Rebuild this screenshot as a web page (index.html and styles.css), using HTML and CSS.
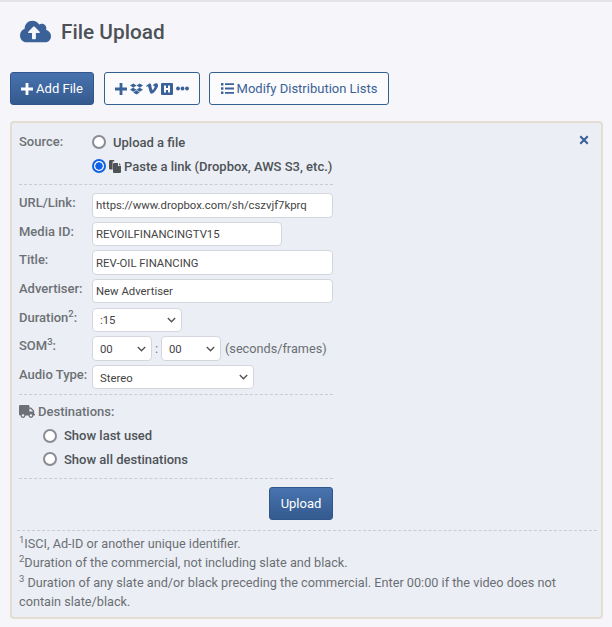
FILE: index.html
```html
<!DOCTYPE html>
<html lang="en">
<head>
<meta charset="utf-8">
<title>File Upload</title>
<link rel="stylesheet" href="styles.css">
</head>
<body>
<header class="page-title">
  <svg class="cloud" viewBox="0 0 640 512" aria-hidden="true"><path d="M537.6 226.6c4.1-10.7 6.4-22.4 6.4-34.6 0-53-43-96-96-96-19.7 0-38.1 6-53.3 16.2C367 64.2 315.3 32 256 32c-88.4 0-160 71.6-160 160 0 2.7.1 5.4.2 8.1C40.2 219.8 0 273.2 0 336c0 79.5 64.5 144 144 144h368c70.7 0 128-57.3 128-128 0-61.9-44-113.6-102.4-125.4zM393.4 288H328v112c0 8.8-7.2 16-16 16h-48c-8.8 0-16-7.2-16-16V288h-65.4c-14.3 0-21.4-17.2-11.3-27.3l105.4-105.4c6.2-6.2 16.4-6.2 22.6 0l105.4 105.4c10.1 10.1 2.9 27.3-11.3 27.3z"/></svg>
  <h1>File Upload</h1>
</header>
<nav class="actions">
  <button class="btn btn-primary" type="button">
    <svg class="ico-plus" viewBox="0 0 12 12" aria-hidden="true"><path d="M4.6 0h2.800v4.600H12v2.800H7.400V12H4.600V7.400H0V4.600h4.600z"/></svg>
    Add File
  </button>
  <button class="btn btn-outline btn-icons" type="button" aria-label="Add from service">
    <svg class="ico-plus" viewBox="0 0 12 12" aria-hidden="true"><path d="M4.6 0h2.800v4.600H12v2.800H7.400V12H4.600V7.400H0V4.600h4.600z"/></svg>
    <svg class="ico-drop" viewBox="0 32 528 448" aria-hidden="true"><path d="M264.400 116.300l-132 84.300 132 84.300-132 84.300L0 284.100l132.300-84.300L0 116.300 132.300 32l132.100 84.300zM131.600 395.700l132-84.300 132 84.300-132 84.300-132-84.300zm132.800-111.600l132-84.300-132-83.600L395.700 32 528 116.300l-132.300 84.300L528 284.800l-132.300 84.300-131.300-85z"/></svg>
    <svg class="ico-vimeo" viewBox="0 60 448 400" aria-hidden="true"><path d="M447.800 153.600c-2 43.600-32.400 103.300-91.400 179.100-60.900 79.200-112.400 118.800-154.600 118.800-26.100 0-48.200-24.100-66.300-72.300C100.300 250 85.300 174.300 56.200 174.300c-3.400 0-15.100 7.100-35.200 21.100L0 168.200c51.600-45.300 100.900-95.700 131.800-98.500 34.900-3.400 56.300 20.500 64.400 71.500 28.700 181.500 41.400 208.900 93.600 126.700 18.700-29.600 28.800-52.100 30.200-67.600 4.800-45.900-35.800-42.800-63.300-31 22-72.100 64.100-107.100 126.200-105.100 45.800 1.200 67.500 31.100 64.900 89.400z"/></svg>
    <svg class="ico-h" viewBox="0 0 12 12" aria-hidden="true"><path fill-rule="evenodd" d="M1 0h10a1 1 0 0 1 1 1v10a1 1 0 0 1-1 1H1a1 1 0 0 1-1-1V1a1 1 0 0 1 1-1zm2 2.500v7h2V7h2v2.500h2v-7H7V5H5V2.500z"/></svg>
    <svg class="ico-dots" viewBox="0 0 13 5" aria-hidden="true"><circle cx="2" cy="2.500" r="1.900"/><circle cx="6.500" cy="2.500" r="1.900"/><circle cx="11" cy="2.500" r="1.900"/></svg>
  </button>
  <button class="btn btn-outline btn-lists" type="button">
    <svg class="ico-list" viewBox="0 0 13 11" aria-hidden="true"><path d="M0 0h2.400v2.400H0zM4 .3h9v1.800H4zM0 4.300h2.400v2.400H0zM4 4.600h9v1.800H4zM0 8.600h2.400V11H0zM4 8.900h9v1.800H4z"/></svg>
    Modify Distribution Lists
  </button>
</nav>
<main class="panel">
  <a class="close" href="#" aria-label="Close">
    <svg viewBox="0 0 10 10" aria-hidden="true"><path d="M2 .5L5 3.500 8 .5 9.500 2 6.500 5 9.500 8 8 9.500 5 6.500 2 9.500 .5 8 3.500 5 .5 2z"/></svg>
  </a>
  <form class="form">
    <div class="source">
      <span class="label">Source:</span>
      <div class="source-opts">
        <label class="radio radio-source"><input type="radio" name="src"> <span>Upload a file</span></label>
        <label class="radio radio-source radio-link"><input type="radio" name="src" checked>
          <svg class="ico-paste" viewBox="0 0 12 13" aria-hidden="true"><path d="M1.200 0h4v1.500H3.600v8H1a1 1 0 0 1-1-1V1.200A1.200 1.200 0 0 1 1.200 0zM5 3h4v3h3v6a1 1 0 0 1-1 1H5a1 1 0 0 1-1-1V4a1 1 0 0 1 1-1zm5 0l2 2.200h-2z"/></svg>
          <span>Paste a link (Dropbox, AWS S3, etc.)</span></label>
      </div>
    </div>
    <hr class="rule rule-first">
    <div class="fields">
      <span class="label">URL/Link:</span><input class="input input-full" type="text" value="https://www.dropbox.com/sh/cszvjf7kprq">
      <span class="label">Media ID:</span><input class="input input-mid" type="text" value="REVOILFINANCINGTV15">
      <span class="label">Title:</span><input class="input input-full" type="text" value="REV-OIL FINANCING">
      <span class="label">Advertiser:</span><input class="input input-full" type="text" value="New Advertiser">
      <span class="label">Duration<sup>2</sup>:</span><select class="select select-duration"><option>:15</option></select>
      <span class="label">SOM<sup>3</sup>:</span>
      <div class="som">
        <select class="select select-som"><option>00</option></select>
        <span class="colon">:</span>
        <select class="select select-som"><option>00</option></select>
        <span class="units">(seconds/frames)</span>
      </div>
      <span class="label">Audio Type:</span><select class="select select-audio"><option>Stereo</option></select>
    </div>
    <hr class="rule rule-second">
    <div class="dest-head">
      <svg class="ico-truck" viewBox="0 0 640 512" aria-hidden="true"><path d="M624 352h-16V243.900c0-12.700-5.100-24.900-14.100-33.900L494 110.100c-9-9-21.200-14.100-33.900-14.100H416V48c0-26.500-21.500-48-48-48H48C21.500 0 0 21.500 0 48v320c0 26.500 21.500 48 48 48h16c0 53 43 96 96 96s96-43 96-96h128c0 53 43 96 96 96s96-43 96-96h48c8.800 0 16-7.200 16-16v-32c0-8.800-7.200-16-16-16zM160 464c-26.500 0-48-21.500-48-48s21.500-48 48-48 48 21.500 48 48-21.500 48-48 48zm320 0c-26.500 0-48-21.500-48-48s21.500-48 48-48 48 21.500 48 48-21.500 48-48 48zm80-208H416V144h44.100l99.900 99.900V256z"/></svg>
      <span class="label">Destinations:</span>
    </div>
    <label class="radio radio-dest radio-dest-first"><input type="radio" name="dest"> <span>Show last used</span></label>
    <label class="radio radio-dest"><input type="radio" name="dest"> <span>Show all destinations</span></label>
    <hr class="rule rule-third">
    <div class="submit-row"><button class="btn btn-primary btn-upload" type="button">Upload</button></div>
  </form>
  <footer class="notes">
    <p><sup>1</sup>ISCI, Ad-ID or another unique identifier.</p>
    <p><sup>2</sup>Duration of the commercial, not including slate and black.</p>
    <p><sup>3</sup> Duration of any slate and/or black preceding the commercial. Enter 00:00 if the video does not contain slate/black.</p>
  </footer>
</main>
</body>
</html>
```

FILE: styles.css
```css
* { box-sizing: border-box; }
html, body { margin: 0; height: 100%; overflow: hidden; }
body {
  background: #f6f6fa;
  border-top: 2px solid #e4e4e7;
  font-family: Roboto, "Liberation Sans", sans-serif;
  font-size: 13px;
  color: #4e5358;
}
.page-title {
  display: flex;
  align-items: flex-start;
  gap: 10px;
  padding: 17px 0 0 20px;
  height: 70px;
}
.cloud { width: 31px; height: 25px; fill: #3a6198; }
.page-title h1 { margin: 0; font-size: 20.8px; line-height: 26px; font-weight: 500; color: #4c5157; }
.actions { display: flex; gap: 9px; padding-left: 10px; }
.btn {
  display: inline-flex;
  align-items: center;
  justify-content: center;
  height: 33px;
  border-radius: 3px;
  font: 400 13px Roboto, sans-serif;
  padding: 0;
}
.btn-primary {
  background: linear-gradient(#4873ae, #345a8f);
  border: 1px solid #30568b;
  color: #fff;
  width: 84px;
  gap: 3px;
}
.btn-outline {
  background: #fbfbfd;
  border: 1px solid #34608f;
  color: #3a6198;
  gap: 3px;
}
.btn-icons { width: 96px; margin-left: 1px; gap: 3px; }
.btn-lists { width: 180px; }
.ico-plus { width: 12px; height: 12px; fill: currentColor; }
.ico-drop { width: 13px; height: 12px; fill: currentColor; }
.ico-vimeo { width: 12px; height: 11px; fill: currentColor; }
.ico-h { width: 12px; height: 12px; fill: currentColor; }
.ico-dots { width: 13px; height: 5px; fill: currentColor; }
.ico-list { width: 13px; height: 11px; fill: currentColor; }
.panel {
  position: relative;
  margin: 16px 9px 0 10px;
  height: 498px;
  background: #ebeef4;
  border: 2px solid #e3ddd3;
  border-radius: 4px;
  padding: 7px 5px 0 7px;
}
.close { position: absolute; top: 12px; right: 12px; width: 10px; height: 10px; color: #3a6198; display: block; }
.close svg { display: block; width: 10px; height: 10px; fill: currentColor; }
.form { width: 314px; }
.label { font-weight: 500; color: #6d7176; font-size: 13px; line-height: 20px; align-self: start; white-space: nowrap; }
.label sup { font-size: 9.500px; line-height: 0; }
.source { display: grid; grid-template-columns: 73px 1fr; }
.source > .label { line-height: 24px; }
.source-opts { display: flex; flex-direction: column; }
.radio { display: flex; align-items: center; font-weight: 500; color: #4e5358; white-space: nowrap; }
.radio input {
  appearance: none;
  margin: 0;
  width: 14px;
  height: 14px;
  flex: none;
  background: #fff;
  border: 2px solid #8b8b96;
  border-radius: 50%;
}
.radio input:checked {
  border-color: #0f62e6;
  background: radial-gradient(circle, #0f62e6 0 3.400px, #fff 4px);
}
.radio-source { height: 24px; gap: 7px; }
.radio-link { gap: 3px; }
.ico-paste { width: 12px; height: 13px; fill: #4e5358; }
.rule { border: 0; border-top: 1px dashed #c9ccd0; margin: 0; }
.rule-first { margin-top: 6px; }
.fields {
  display: grid;
  grid-template-columns: 73px 241px;
  grid-auto-rows: 24.330px;
  row-gap: 4.330px;
  margin-top: 8px;
}
.input, .select {
  height: 24.500px;
  border: 1px solid #d3d6dc;
  border-radius: 4px;
  background: #fff;
  font: 400 11.330px Roboto, sans-serif;
  color: #444;
}
.input { padding: 0 3px; outline: none; }
.input-full { width: 241px; }
.input-mid { width: 190px; }
.select {
  appearance: none;
  padding: 1px 0 0 7px;
  background: #fff url("data:image/svg+xml,%3Csvg xmlns='http://www.w3.org/2000/svg' viewBox='0 0 9 6'%3E%3Cpath d='M.8 1l3.700 3.700L8.200 1' fill='none' stroke='%23555' stroke-width='1.400'/%3E%3C/svg%3E") no-repeat right 5px center / 9px 6px;
}
.select-duration { width: 90px; }
.select-som { width: 60px; }
.select-audio { width: 162px; }
.som { display: flex; align-items: center; height: 24.500px; }
.colon { width: 9px; text-align: center; color: #777; }
.units { margin-left: 4px; font-size: 12.700px; color: #6a6e73; }
.rule-second { margin-top: 5px; }
.dest-head { display: flex; align-items: center; gap: 3px; height: 20px; margin-top: 6.700px; }
.ico-truck { width: 16px; height: 13px; fill: #6d7176; }
.radio-dest { height: 23px; padding-left: 24px; gap: 7px; margin-top: .5px; }
.radio-dest-first { margin-top: 2.500px; }
.rule-third { margin-top: 7px; }
.submit-row { display: flex; justify-content: flex-end; margin-top: 8px; }
.btn-upload { width: 64px; }
.notes { margin: 10px 0 0 -2px; border-top: 1px dashed #c9ccd0; padding: 2.600px 0 0 2px; width: 580px; font-size: 12.700px; line-height: 19.500px; color: #6b6f75; }
.notes p { margin: 0; }
.notes sup { font-size: 9.500px; line-height: 0; }
```
